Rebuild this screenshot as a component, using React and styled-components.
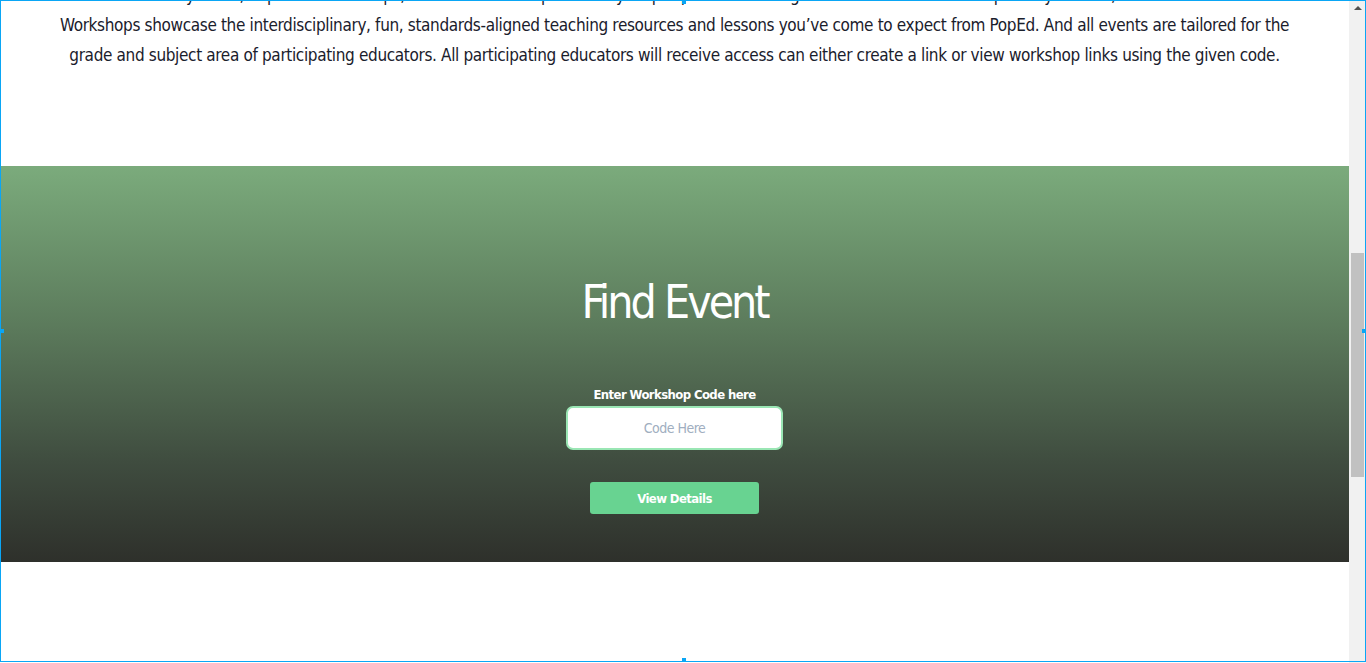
import React from 'react';
import styled, {createGlobalStyle} from 'styled-components';

const COLORS = {
  text: '#1a202c',
  green: '#68d391',
  greenLight: '#9ae6b4',
  placeholder: '#a0aec0',
  highlight: '#0aa6f5',
  track: '#f1f1f1',
  thumb: '#c1c1c1',
};

const FONT = `"DejaVu Sans Condensed", "DejaVu Sans", sans-serif`;

const GlobalStyle = createGlobalStyle`
  html, body {
    margin: 0;
    padding: 0;
    overflow: hidden;
    background: #fff;
  }
  body {
    font-family: ${FONT};
    color: ${COLORS.text};
  }
  * { box-sizing: border-box; }
`;

const Frame = styled.div`
  display: flex;
  width: 1366px;
  height: 663px;
  overflow: hidden;
`;

const Page = styled.main`
  flex: 1;
  display: flex;
  flex-direction: column;
`;

const Intro = styled.p`
  margin: -20px 0 0;
  text-align: center;
  font-size: 17px;
  letter-spacing: -0.35px;
  line-height: 30px;
  padding-bottom: 96px;
`;

const Line = styled.span`
  display: block;
  white-space: nowrap;
`;

const FindSection = styled.section`
  height: 396px;
  background: linear-gradient(180deg, #7bab7c 0%, #5c7b5c 40%, #3f4c3f 75%, #2e302b 100%);
  display: flex;
  flex-direction: column;
  align-items: center;
  padding-top: 108px;
`;

const Title = styled.h1`
  margin: 0;
  color: #fff;
  font-weight: 400;
  font-size: 46px;
  letter-spacing: -3px;
  line-height: 56px;
`;

const Form = styled.form`
  display: flex;
  flex-direction: column;
  align-items: center;
  margin-top: 56px;
`;

const Label = styled.label`
  color: #fff;
  font-weight: 700;
  font-size: 13px;
  letter-spacing: -0.6px;
  line-height: 18px;
  margin-bottom: 2px;
`;

const CodeInput = styled.input`
  width: 217px;
  height: 44px;
  border: 2px solid ${COLORS.greenLight};
  border-radius: 7px;
  background: #fff;
  text-align: center;
  font-family: ${FONT};
  font-size: 14px;
  letter-spacing: -0.5px;
  outline: none;
  &::placeholder { color: ${COLORS.placeholder}; }
`;

const Button = styled.button`
  margin-top: 32px;
  width: 169px;
  height: 32px;
  border: none;
  border-radius: 3px;
  background: ${COLORS.green};
  color: #fff;
  font-family: ${FONT};
  font-weight: 700;
  font-size: 13px;
  letter-spacing: -0.6px;
`;

const Scrollbar = styled.div`
  width: 17px;
  background: ${COLORS.track};
  display: flex;
  flex-direction: column;
  align-items: center;
`;

const Arrow = styled.div`
  width: 0;
  height: 0;
  margin-top: 6px;
  border-left: 4px solid transparent;
  border-right: 4px solid transparent;
  border-bottom: 4px solid #505050;
`;

const Thumb = styled.div`
  width: 13px;
  height: 224px;
  margin-top: 243px;
  background: ${COLORS.thumb};
`;

const Highlight = styled.div`
  position: fixed;
  inset: 0 0 1px 0;
  border: 1px solid ${COLORS.highlight};
  pointer-events: none;
`;

const Handle = styled.span`
  position: absolute;
  width: 4px;
  height: 4px;
  background: ${COLORS.highlight};
  ${p => p.$side === 'left' && 'left: -1px; top: 328px;'}
  ${p => p.$side === 'right' && 'right: -1px; top: 328px;'}
  ${p => p.$side === 'top' && 'top: -1px; left: 681px;'}
  ${p => p.$side === 'bottom' && 'bottom: -1px; left: 681px;'}
`;

const App = () => {
  return <>
    <GlobalStyle/>
    <Frame>
      <Page>
        <Intro>
          <Line>Similar to our dynamic, in-person workshops, the PoPS Workshop Inventory helps speakers and organizers to have a better repository to save, store and share their.</Line>
          <Line>Workshops showcase the interdisciplinary, fun, standards-aligned teaching resources and lessons you’ve come to expect from PopEd. And all events are tailored for the</Line>
          <Line>grade and subject area of participating educators. All participating educators will receive access can either create a link or view workshop links using the given code.</Line>
        </Intro>
        <FindSection>
          <Title>Find Event</Title>
          <Form onSubmit={e => e.preventDefault()}>
            <Label htmlFor="code">Enter Workshop Code here</Label>
            <CodeInput id="code" placeholder="Code Here"/>
            <Button type="submit">View Details</Button>
          </Form>
        </FindSection>
      </Page>
      <Scrollbar>
        <Arrow/>
        <Thumb/>
      </Scrollbar>
    </Frame>
    <Highlight>
      <Handle $side="left"/>
      <Handle $side="right"/>
      <Handle $side="top"/>
      <Handle $side="bottom"/>
    </Highlight>
  </>
};

export default App;
